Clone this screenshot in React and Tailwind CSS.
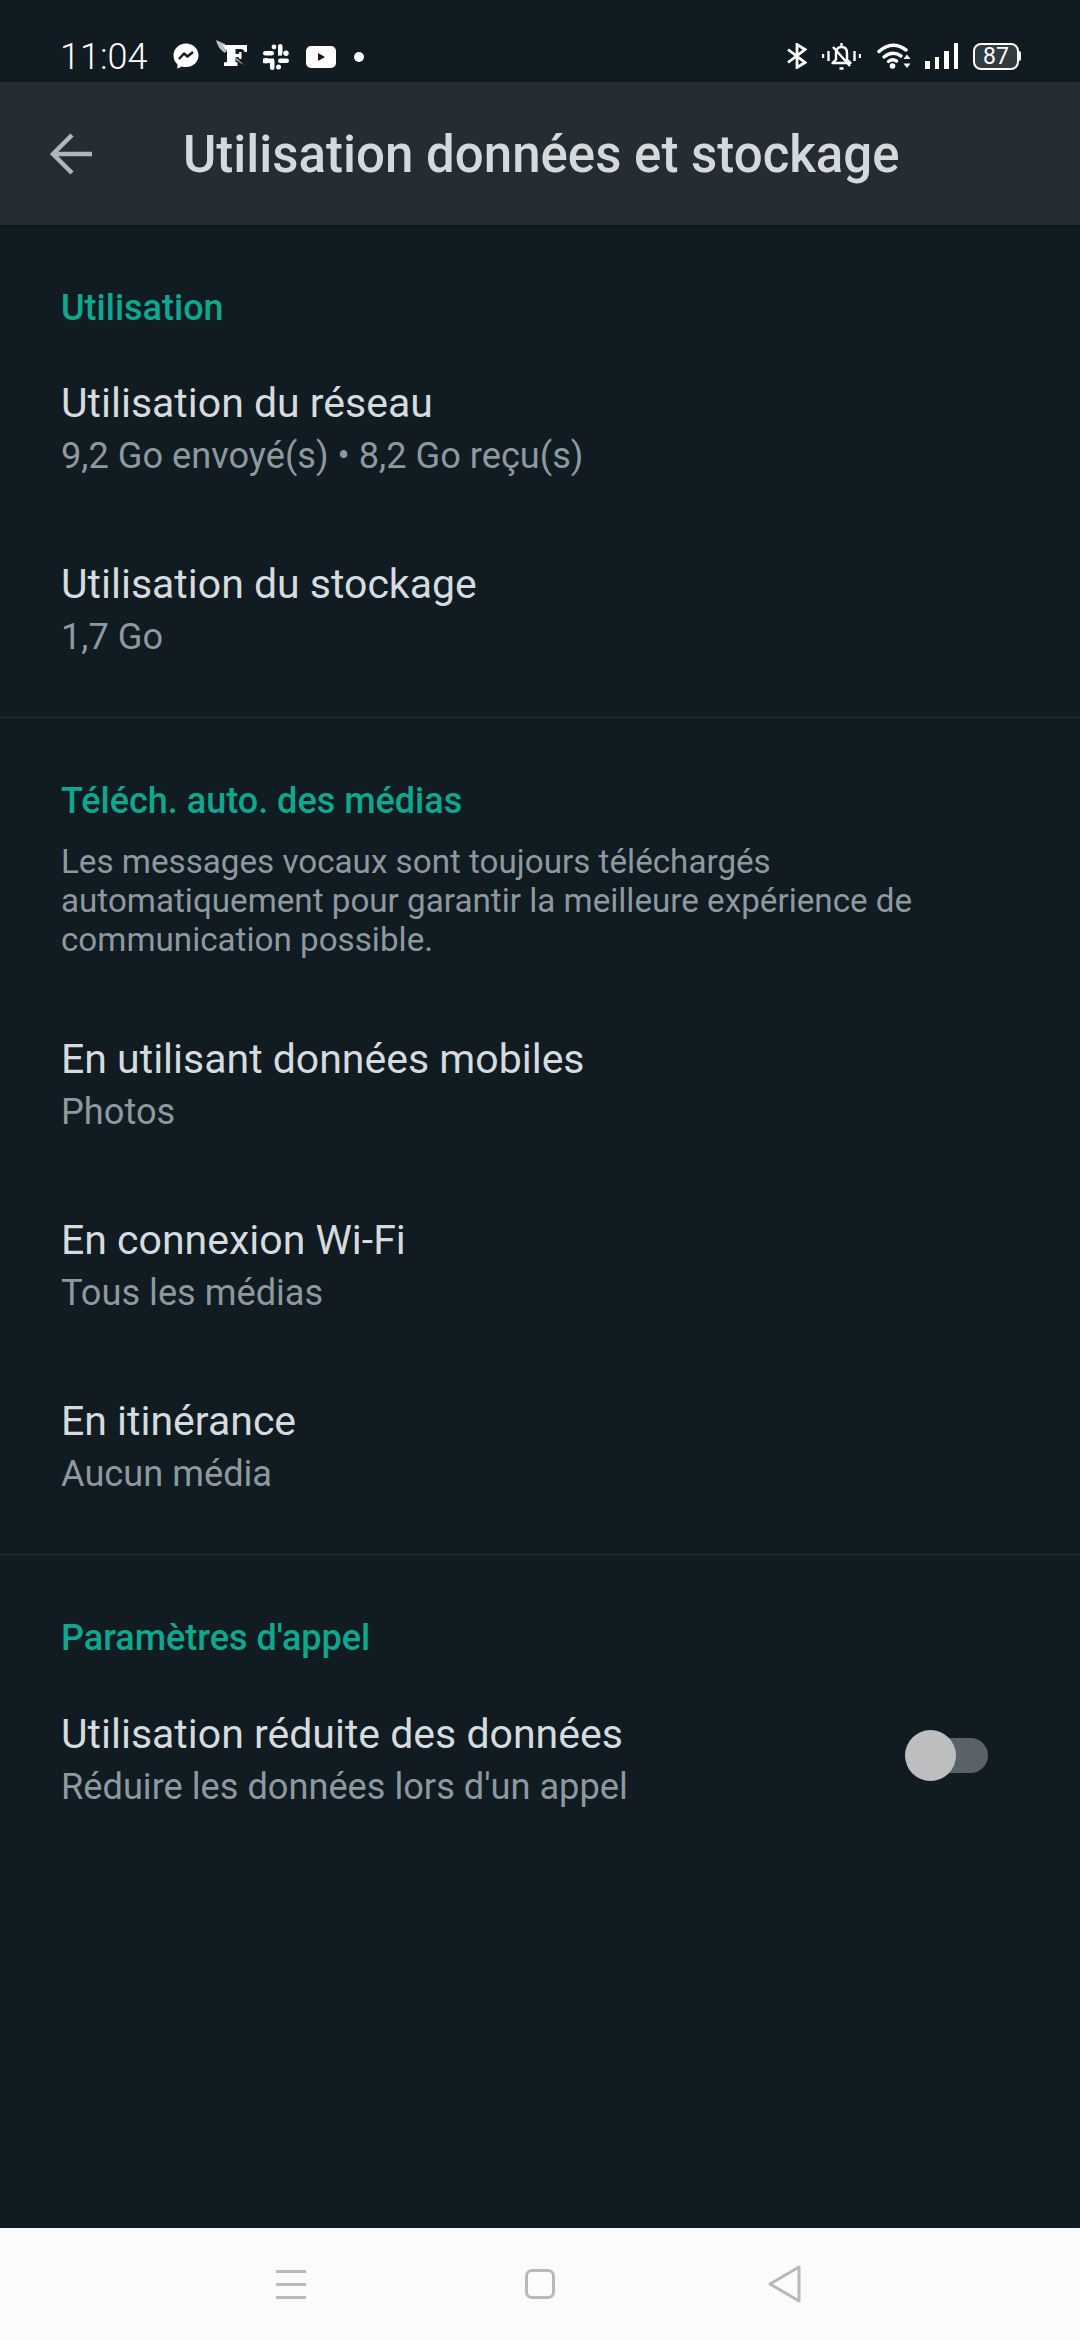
const font = { fontFamily: 'Roboto, sans-serif' };

function Item({ title, sub, children }) {
  return (
    <div className="flex h-[181px] items-center justify-between pl-[61px] pr-[92px]">
      <div className="mt-[-1px] flex flex-col">
        <div className="text-[41px] leading-[52px] text-[#d5dbde]">{title}</div>
        <div className="text-[36.2px] leading-[53px] text-[#8d999f]">{sub}</div>
      </div>
      {children}
    </div>
  );
}

function Section({ children }) {
  return <div className="px-[61px] text-[36px] leading-[44px] font-medium text-[#0fa88f]">{children}</div>;
}

function Messenger() {
  return (
    <svg width="26" height="27" viewBox="0 0 26 27">
      <path fill="#fff" d="M13 .5C5.900.5.500 5.600.500 12.400c0 3.600 1.500 6.700 3.900 8.800v4.600l4.300-2.400c1.400.4 2.800.6 4.300.6 7.100 0 12.500-5.200 12.500-11.600S20.100.5 13 .5z" />
      <path fill="none" stroke="#101b22" strokeWidth="2.400" strokeLinejoin="round" d="M6 16l5-5.500 3.500 3L20 9" />
    </svg>
  );
}

function Figaro() {
  return (
    <svg width="32" height="28" viewBox="0 0 32 28">
      <path fill="#b9bfc2" d="M0 0l9 4 3 5-3 4Q2 9 0 0z" />
      <path fill="#fff" d="M7 5h24v7h-2.500q-.5-3-4-3h-5v5h3l1-2h2v7h-2l-1-2h-3v5l2 .5V26H8v-3.500l3-.5V9H9z" />
      <path fill="#8a9296" d="M20 17l8 8-3-1.500-6-4z" />
    </svg>
  );
}

function Slack() {
  return (
    <svg width="26" height="26" viewBox="0 0 26 26" fill="#fff">
      <rect x="15" y="0" width="4.500" height="11" rx="2.200" />
      <circle cx="11" cy="3" r="2.400" />
      <rect x="0" y="7" width="11" height="4.600" rx="2.300" />
      <rect x="15" y="7" width="4" height="4.600" />
      <circle cx="23" cy="9.300" r="2.700" />
      <rect x="0" y="14.500" width="11" height="4.600" rx="0" />
      <circle cx="3" cy="16.800" r="2.700" />
      <rect x="15" y="14.500" width="11" height="4.600" rx="2.300" />
      <rect x="7" y="15" width="4.500" height="11" rx="2.200" />
      <circle cx="15.500" cy="23" r="2.500" />
    </svg>
  );
}

function YouTube() {
  return (
    <svg width="30" height="22" viewBox="0 0 30 22">
      <rect width="30" height="22" rx="5" fill="#fff" />
      <path fill="#101b22" d="M12 7l7 4-7 4z" />
    </svg>
  );
}

function Bluetooth() {
  return (
    <svg width="20" height="26" viewBox="0 0 20 26" fill="none" stroke="#fff" strokeWidth="2.800">
      <path d="M1 6.500l17 13-8 5V1.500l8 5-17 13" />
    </svg>
  );
}

function Bell() {
  return (
    <svg width="39" height="28" viewBox="0 0 39 28" fill="none" stroke="#fff" strokeWidth="2.400">
      <path d="M1 12v4M6.500 9v10M32.500 9v10M38 12v4" />
      <path d="M10.500 21l3.500-3.500V11q0-6 5.500-6t5.500 6v6.500l3.500 3.500z" strokeLinejoin="round" />
      <path d="M11 5l17 19M17.500 26.500h4M19.500 1v3" />
    </svg>
  );
}

function Wifi() {
  return (
    <svg width="34" height="26" viewBox="0 0 34 26" fill="none" stroke="#fff" strokeWidth="3.400" strokeLinecap="round">
      <path d="M2 8.500Q15-3 29 7" />
      <path d="M7 14q8.500-7 17-1" />
      <path d="M11.500 18.500q4-3.200 8-.5" />
      <circle cx="15.500" cy="23" r="2.800" fill="#fff" stroke="none" />
      <path fill="#fff" stroke="none" d="M30 11.500l3.500 4.500h-7zM30 25l3.500-4.500h-7z" />
    </svg>
  );
}

function Signal() {
  return (
    <div className="flex h-[26px] items-end gap-[5px]">
      <div className="h-[8px] w-[4.500px] bg-white" />
      <div className="h-[12px] w-[4.500px] bg-white" />
      <div className="h-[18px] w-[4.500px] bg-white" />
      <div className="h-[26px] w-[4.500px] bg-white" />
    </div>
  );
}

function Battery() {
  return (
    <div className="flex items-center">
      <div className="flex h-[27px] w-[46px] items-center justify-center rounded-[8px] border-[2px] border-white bg-[#303b42] text-[23px] leading-none text-white">87</div>
      <div className="h-[10px] w-[2px] rounded-r-[2px] bg-white" />
    </div>
  );
}

function Hamburger() {
  return (
    <div className="flex h-[29px] w-[30px] flex-col justify-between">
      <div className="h-[3px] bg-[#b9b9b9]" />
      <div className="h-[3px] bg-[#b9b9b9]" />
      <div className="h-[3px] bg-[#b9b9b9]" />
    </div>
  );
}

export default function App() {
  return (
    <div className="flex h-[2340px] w-[1080px] flex-col overflow-hidden bg-[#101b22]" style={font}>
      <div className="flex h-[82px] items-end justify-between pb-[12px] pl-[60px] pr-[59px] text-white">
        <div className="flex items-center">
          <div className="w-[110px] text-[36px] leading-[26px] font-light">11:04</div>
          <div className="ml-[3px] flex items-center gap-[17px]">
            <Messenger />
            <div className="mt-[-6px] mr-[-2px]"><Figaro /></div>
            <Slack />
            <YouTube />
            <div className="ml-[1px] h-[10px] w-[10px] rounded-full bg-white" />
          </div>
        </div>
        <div className="flex items-center">
          <Bluetooth />
          <div className="ml-[15px]"><Bell /></div>
          <div className="ml-[16px]"><Wifi /></div>
          <div className="ml-[14px]"><Signal /></div>
          <div className="ml-[15px]"><Battery /></div>
        </div>
      </div>

      <div className="flex h-[143px] items-center bg-[#232d33] shadow-[0_2px_2px_rgba(0,0,0,0.2)]">
        <svg className="ml-[49px]" width="44" height="44" viewBox="0 0 44 44" fill="none" stroke="#b1b6b9" strokeWidth="4.500">
          <path d="M43 22H4M23 3L4 22l19 19" />
        </svg>
        <div className="ml-[90px] mt-[3px] text-[51px] leading-[60px] font-medium text-[#d5d9db]">Utilisation données et stockage</div>
      </div>

      <div className="pt-[61px] pb-[16px]">
        <Section>Utilisation</Section>
        <div className="mt-[9px]">
          <Item title="Utilisation du réseau" sub="9,2 Go envoyé(s) • 8,2 Go reçu(s)" />
          <Item title="Utilisation du stockage" sub="1,7 Go" />
        </div>
      </div>

      <div className="h-px bg-[#232d33]" />

      <div className="pt-[61px] pb-[16px]">
        <Section>Téléch. auto. des médias</Section>
        <div className="mt-[19px] px-[61px] text-[33.2px] leading-[39px] text-[#8d999f]">
          Les messages vocaux sont toujours téléchargés
          <br />
          automatiquement pour garantir la meilleure expérience de
          <br />
          communication possible.
        </div>
        <div className="mt-[36px]">
          <Item title="En utilisant données mobiles" sub="Photos" />
          <Item title="En connexion Wi-Fi" sub="Tous les médias" />
          <Item title="En itinérance" sub="Aucun média" />
        </div>
      </div>

      <div className="h-px bg-[#232d33]" />

      <div className="pt-[61px]">
        <Section>Paramètres d'appel</Section>
        <div className="mt-[10px]">
          <Item title="Utilisation réduite des données" sub="Réduire les données lors d'un appel">
            <div className="relative mb-[10px] h-[35px] w-[66px] rounded-full bg-[#596268]">
              <div className="absolute left-[-17px] top-[-8px] h-[51px] w-[51px] rounded-full bg-[#bcbebf]" />
            </div>
          </Item>
        </div>
      </div>

      <div className="mt-auto flex h-[112px] items-center bg-[#fbfbfb]">
        <div className="ml-[276px]"><Hamburger /></div>
        <div className="ml-[219px] h-[30px] w-[30px] rounded-[7px] border-[3px] border-[#b9b9b9]" />
        <svg className="ml-[213px]" width="34" height="38" viewBox="0 0 34 38" fill="none" stroke="#b9b9b9" strokeWidth="3" strokeLinejoin="round">
          <path d="M31 2v34L2 19z" />
        </svg>
      </div>
    </div>
  );
}
